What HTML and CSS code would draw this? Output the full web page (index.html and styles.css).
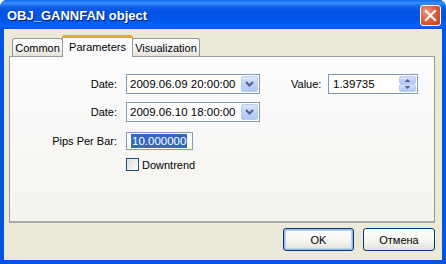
FILE: index.html
```html
<!DOCTYPE html>
<html lang="en">
<head>
    <meta charset="UTF-8">
    <title>OBJ_GANNFAN object</title>
    <link rel="stylesheet" href="styles.css">
</head>
<body>
    <div class="window">
        <div class="titlebar">
            <span class="title">OBJ_GANNFAN object</span>
            <div class="close">
                <svg width="13" height="13" viewBox="0 0 13 13">
                    <path d="M2 2 L11 11 M11 2 L2 11" stroke="#fff" stroke-width="2.2" stroke-linecap="square"/>
                </svg>
            </div>
        </div>
        <div class="client">
            <div class="tabs">
                <div class="tab">Common</div>
                <div class="tab active">Parameters</div>
                <div class="tab">Visualization</div>
            </div>
            <div class="panel">
                <div class="row">
                    <label class="label">Date:</label>
                    <div class="field combo">
                        <span class="value">2009.06.09 20:00:00</span>
                        <span class="drop">
                            <svg width="9" height="6" viewBox="0 0 9 6"><path d="M1 1 L4.5 4.5 L8 1" fill="none" stroke="#4d6185" stroke-width="2"/></svg>
                        </span>
                    </div>
                    <label class="label value-label">Value:</label>
                    <div class="field spin">
                        <span class="value">1.39735</span>
                        <span class="spin-btns">
                            <span class="spin-btn"><svg width="7" height="4" viewBox="0 0 7 4"><path d="M0.5 4 L3.5 1 L6.5 4Z" fill="#4d6185"/></svg></span>
                            <span class="spin-btn"><svg width="7" height="4" viewBox="0 0 7 4"><path d="M0.5 0 L3.5 3 L6.5 0Z" fill="#4d6185"/></svg></span>
                        </span>
                    </div>
                </div>
                <div class="row row-second">
                    <label class="label">Date:</label>
                    <div class="field combo">
                        <span class="value">2009.06.10 18:00:00</span>
                        <span class="drop">
                            <svg width="9" height="6" viewBox="0 0 9 6"><path d="M1 1 L4.5 4.5 L8 1" fill="none" stroke="#4d6185" stroke-width="2"/></svg>
                        </span>
                    </div>
                </div>
                <div class="row row-pips">
                    <label class="label">Pips Per Bar:</label>
                    <div class="field pips">
                        <span class="selected">10.000000</span>
                    </div>
                </div>
                <div class="row row-check">
                    <span class="checkbox"></span>
                    <span class="check-text">Downtrend</span>
                </div>
            </div>
            <div class="buttons">
                <div class="btn default">OK</div>
                <div class="btn">Отмена</div>
            </div>
        </div>
    </div>
</body>
</html>
```

FILE: styles.css
```css
body {
    margin: 0;
    font-family: "Liberation Sans", Arial, sans-serif;
    font-size: 11px;
    color: #000;
    background: #fff;
}
.window {
    width: 446px;
    height: 264px;
    box-sizing: border-box;
    display: flex;
    flex-direction: column;
    background: #0054e3;
    border-radius: 7px 7px 0 0;
    overflow: hidden;
}
.titlebar {
    height: 29px;
    flex: none;
    display: flex;
    align-items: center;
    justify-content: space-between;
    padding: 0 5px 0 7px;
    background: linear-gradient(#0a68f0 0, #3c8ffe 3px, #0d5fe8 7px, #0054e3 12px, #0056e9 20px, #0064f8 26px, #0050dc 29px);
}
.title {
    color: #fff;
    font-family: "Liberation Sans", Arial, sans-serif;
    font-weight: bold;
    font-size: 13px;
    text-shadow: 1px 1px 0 #0a1e6a;
    margin-top: 1px;
}
.close {
    width: 19px;
    height: 19px;
    margin-top: 1px;
    border: 1px solid #fff;
    border-radius: 3px;
    display: flex;
    align-items: center;
    justify-content: center;
    background: radial-gradient(circle at 30% 30%, #f19b83 0, #e35d3c 45%, #c6401c 100%);
}
.client {
    flex: 1;
    margin: 0 4px 4px 4px;
    background: #ece9d8;
    padding: 6px 7px 0 5px;
    display: flex;
    flex-direction: column;
}
.tabs {
    display: flex;
    height: 21px;
    padding-left: 3px;
    position: relative;
    z-index: 1;
}
.tab {
    margin-top: 3px;
    height: 18px;
    box-sizing: border-box;
    padding: 0 5px;
    border: 1px solid #919b9c;
    border-bottom: none;
    border-radius: 3px 3px 0 0;
    background: linear-gradient(#ffffff, #f3f3ef 60%, #e4e2d7);
    display: flex;
    align-items: center;
    margin-right: -1px;
}
.tab:first-child {
    width: 51px;
    justify-content: center;
}
.tab.active {
    margin-top: 0;
    height: 22px;
    width: 71px;
    justify-content: center;
    border-top: 3px solid #f2a130;
    background: #fcfcfe;
    padding-bottom: 2px;
    position: relative;
    z-index: 2;
}
.tab:last-child {
    width: 68px;
    justify-content: center;
}
.panel {
    height: 167px;
    box-sizing: border-box;
    border: 1px solid #919b9c;
    border-bottom: 2px solid #a6acad;
    background: linear-gradient(#fcfcfe, #f7f6f2 70%, #f4f3ee);
    padding-top: 17px;
}
.row {
    display: flex;
    align-items: center;
}
.row-second {
    margin-top: 8px;
}
.row-pips {
    margin-top: 10px;
}
.row-check {
    margin-top: 8px;
    padding-left: 116px;
}
.label {
    width: 107px;
    text-align: right;
    margin-right: 9px;
    flex: none;
}
.value-label {
    width: 37px;
    text-align: left;
    margin-left: 31px;
    margin-right: 0;
}
.field {
    box-sizing: border-box;
    border: 1px solid #7f9db9;
    background: #fff;
    display: flex;
    align-items: center;
}
.combo {
    width: 134px;
    height: 20px;
    padding: 0 1px 0 3px;
    justify-content: space-between;
}
.spin {
    width: 90px;
    height: 20px;
    padding: 0 1px 0 4px;
    justify-content: space-between;
}
.value {
    font-size: 11.5px;
}
.drop {
    width: 17px;
    height: 16px;
    box-sizing: border-box;
    border: 1px solid #b9cbf3;
    border-radius: 2px;
    background: linear-gradient(#dbe6fe, #c1d3fb 50%, #b2c6f5);
    display: flex;
    align-items: center;
    justify-content: center;
}
.spin-btns {
    display: flex;
    flex-direction: column;
    width: 17px;
    height: 16px;
}
.spin-btn {
    flex: 1;
    box-sizing: border-box;
    border: 1px solid #b9cbf3;
    border-radius: 2px;
    background: linear-gradient(#dbe6fe, #c1d3fb 50%, #b2c6f5);
    display: flex;
    align-items: center;
    justify-content: center;
}
.pips {
    width: 67px;
    height: 18px;
    padding-left: 4px;
}
.selected {
    background: #316ac5;
    color: #fff;
    font-size: 11.5px;
    line-height: 14px;
    padding: 0 1px;
}
.checkbox {
    width: 13px;
    height: 13px;
    box-sizing: border-box;
    border: 1px solid #1c5180;
    background: linear-gradient(135deg, #dcdcd7, #ffffff);
    margin-right: 3px;
}
.buttons {
    display: flex;
    justify-content: flex-end;
    gap: 9px;
    margin-top: 5px;
}
.btn {
    height: 23px;
    box-sizing: border-box;
    border: 1px solid #003c74;
    border-radius: 3px;
    background: linear-gradient(#ffffff, #f4f4f0 60%, #e3e1d6);
    display: flex;
    align-items: center;
    justify-content: center;
    width: 72px;
}
.btn.default {
    width: 71px;
    box-shadow: inset 0 0 0 1px #98b8ea, inset 0 0 0 2px #bcd2f4;
}
```
